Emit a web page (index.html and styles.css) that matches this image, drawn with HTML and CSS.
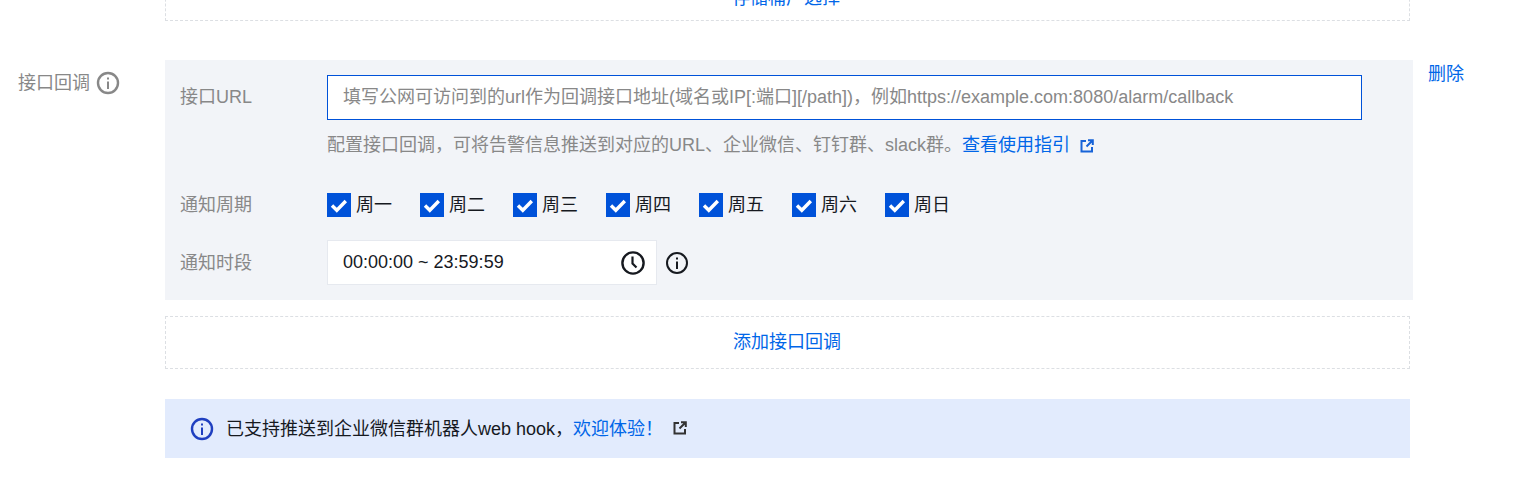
FILE: index.html
```html
<!DOCTYPE html>
<html lang="zh-CN">
<head>
<meta charset="utf-8">
<title>接口回调</title>
<link rel="stylesheet" href="styles.css">
</head>
<body>
<div class="page">
  <div class="form-row top-row">
    <div class="form-label"></div>
    <div class="form-body">
      <div class="dashed clipped"><a class="link">存储桶广选择</a></div>
    </div>
  </div>
  <div class="form-row">
    <div class="form-label">
      <span>接口回调</span>
      <svg class="icon-i" viewBox="0 0 24 24"><circle cx="12" cy="12" r="10" fill="none" stroke="currentColor" stroke-width="2.4"/><rect x="11" y="10.5" width="2" height="7.5" fill="currentColor"/><rect x="11" y="6.5" width="2" height="2" fill="currentColor"/></svg>
    </div>
    <div class="form-body">
      <div class="panel-line">
        <div class="panel">
          <div class="field url-field">
            <div class="field-label">接口URL</div>
            <div class="field-control">
              <div class="url-input">填写公网可访问到的url作为回调接口地址(域名或IP[:端口][/path])，例如https://example.com:8080/alarm/callback</div>
              <div class="hint">配置接口回调，可将告警信息推送到对应的URL、企业微信、钉钉群、slack群。<a class="link">查看使用指引</a>
                <svg class="icon-ext blue" viewBox="0 0 14 14"><path d="M6 2H1.5v10.5H12V8" fill="none" stroke="currentColor" stroke-width="2"/><path d="M8 1.2h4.8V6M12.5 1.5L6.5 7.5" fill="none" stroke="currentColor" stroke-width="2"/></svg>
              </div>
            </div>
          </div>
          <div class="field week-field">
            <div class="field-label">通知周期</div>
            <div class="weeks">
              <label class="check"><span class="box"><svg viewBox="0 0 24 24"><path d="M5 12.5l4.8 4.8 9-9.3" fill="none" stroke="#fff" stroke-width="3.4"/></svg></span>周一</label>
              <label class="check"><span class="box"><svg viewBox="0 0 24 24"><path d="M5 12.5l4.8 4.8 9-9.3" fill="none" stroke="#fff" stroke-width="3.4"/></svg></span>周二</label>
              <label class="check"><span class="box"><svg viewBox="0 0 24 24"><path d="M5 12.5l4.8 4.8 9-9.3" fill="none" stroke="#fff" stroke-width="3.4"/></svg></span>周三</label>
              <label class="check"><span class="box"><svg viewBox="0 0 24 24"><path d="M5 12.5l4.8 4.8 9-9.3" fill="none" stroke="#fff" stroke-width="3.4"/></svg></span>周四</label>
              <label class="check"><span class="box"><svg viewBox="0 0 24 24"><path d="M5 12.5l4.8 4.8 9-9.3" fill="none" stroke="#fff" stroke-width="3.4"/></svg></span>周五</label>
              <label class="check"><span class="box"><svg viewBox="0 0 24 24"><path d="M5 12.5l4.8 4.8 9-9.3" fill="none" stroke="#fff" stroke-width="3.4"/></svg></span>周六</label>
              <label class="check"><span class="box"><svg viewBox="0 0 24 24"><path d="M5 12.5l4.8 4.8 9-9.3" fill="none" stroke="#fff" stroke-width="3.4"/></svg></span>周日</label>
            </div>
          </div>
          <div class="field time-field">
            <div class="field-label">通知时段</div>
            <div class="time-input">
              <span>00:00:00 ~ 23:59:59</span>
              <svg class="icon-clock" viewBox="0 0 24 24"><circle cx="12" cy="12" r="10.6" fill="none" stroke="currentColor" stroke-width="2.4"/><path d="M11.5 5.5V12.5L15.5 16.5" fill="none" stroke="currentColor" stroke-width="2.2"/></svg>
            </div>
            <svg class="icon-i dark" viewBox="0 0 24 24"><circle cx="12" cy="12" r="10" fill="none" stroke="currentColor" stroke-width="2"/><rect x="11" y="10.5" width="2" height="7.5" fill="currentColor"/><rect x="11" y="6.5" width="2" height="2" fill="currentColor"/></svg>
          </div>
        </div>
        <a class="link delete">删除</a>
      </div>
      <div class="dashed add"><a class="link">添加接口回调</a></div>
      <div class="alert">
        <svg class="icon-i alert-icon" viewBox="0 0 24 24"><circle cx="12" cy="12" r="10" fill="none" stroke="currentColor" stroke-width="2.4"/><rect x="11" y="10.5" width="2" height="7.5" fill="currentColor"/><rect x="11" y="6.5" width="2" height="2" fill="currentColor"/></svg>
        <span class="alert-text">已支持推送到企业微信群机器人web hook，<a class="link">欢迎体验！</a></span>
        <svg class="icon-ext dark-ext" viewBox="0 0 14 14"><path d="M6 2H1.5v10.5H12V8" fill="none" stroke="currentColor" stroke-width="2"/><path d="M8 1.2h4.8V6M12.5 1.5L6.5 7.5" fill="none" stroke="currentColor" stroke-width="2"/></svg>
      </div>
    </div>
  </div>
</div>
</body>
</html>
```
FILE: styles.css
```css
* { box-sizing: border-box; }
html, body { margin: 0; padding: 0; background: #fff; overflow: hidden; }
body {
  font-family: "Liberation Sans", "Noto Sans CJK SC", sans-serif;
  font-size: 18px;
  color: #16191f;
}
.page { height: 489px; overflow: hidden; }
.form-row { display: flex; }
.form-label {
  width: 165px;
  flex: none;
  padding: 10px 0 0 18px;
  display: flex;
  align-items: flex-start;
  color: #888;
  line-height: 26px;
}
.top-row { height: 100px; margin-top: -40px; }
.form-body { width: 1248px; }
.link { color: #0066e8; text-decoration: none; }
.dashed {
  width: 1245px;
  border: 1px dashed #dcdfe3;
  display: flex;
  justify-content: center;
  align-items: center;
}
.clipped { height: 61px; padding: 10px 3px 0 0; }
.icon-i { width: 24px; height: 24px; flex: none; }
.form-label .icon-i { margin: 1px 0 0 6px; color: #888; }
.panel-line { display: flex; height: 240px; }
.panel {
  width: 1248px;
  flex: none;
  background: #f2f4f8;
  padding: 15px 0 0 15px;
}
.delete { flex: none; margin: 1px 0 0 15px; line-height: 26px; }
.field { display: flex; }
.field-label { width: 147px; flex: none; color: #888; line-height: 26px; }
.url-field .field-label { padding-top: 9px; }
.url-input {
  width: 1035px;
  height: 45px;
  background: #fff;
  border: 1px solid #0052d9;
  padding: 0 15px;
  line-height: 43px;
  color: #888;
  white-space: nowrap;
}
.hint { color: #888; line-height: 26px; margin-top: 12px; display: flex; align-items: center; }
.icon-ext { width: 14px; height: 14px; flex: none; }
.blue { color: #1763d8; margin-left: 10px; margin-top: 2px; }
.week-field { margin-top: 34px; align-items: center; }
.weeks { display: flex; gap: 28px; }
.check { display: flex; align-items: center; line-height: 26px; color: #16191f; }
.box { width: 24px; height: 24px; background: #0052d9; margin-right: 5px; display: block; }
.box svg { display: block; width: 24px; height: 24px; }
.time-field { margin-top: 22px; align-items: center; }
.time-input {
  width: 330px;
  height: 45px;
  background: #fff;
  border: 1px solid #e6e9ef;
  padding: 0 11px 0 15px;
  display: flex;
  align-items: center;
  justify-content: space-between;
}
.icon-clock { width: 24px; height: 24px; color: #16191f; }
.dark { color: #16191f; margin: 0 0 0 8px; }
.add { height: 53px; margin-top: 16px; padding: 0 1px 6px 0; }
.alert {
  width: 1245px;
  height: 59px;
  margin-top: 30px;
  background: #e2ebfd;
  display: flex;
  align-items: center;
  padding-left: 25px;
}
.alert-icon { color: #1f3fc0; margin-right: 12px; }
.alert-text { padding-bottom: 4px; }
.dark-ext { color: #333; margin: 0 0 2px 10px; }
```
